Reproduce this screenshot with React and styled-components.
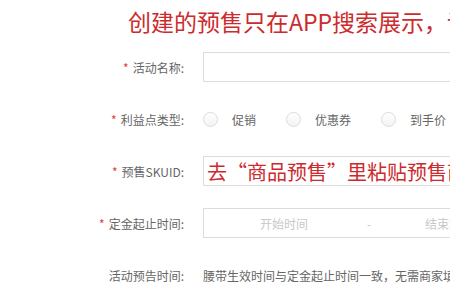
import React from "react";
import styled, { createGlobalStyle } from "styled-components";

const GlobalStyle = createGlobalStyle`
  html, body {
    margin: 0;
    padding: 0;
    background: #fff;
    overflow: hidden;
  }
  body {
    font-family: "Noto Sans CJK SC", "Liberation Sans", sans-serif;
  }
`;

const Page = styled.div`
  width: 450px;
  height: 300px;
  overflow: hidden;
  white-space: nowrap;
`;

const Title = styled.div`
  height: 42px;
  line-height: 42px;
  margin-bottom: 10px;
  padding-left: 128px;
  font-size: 23px;
  color: #cc2b2d;
`;

const Row = styled.div`
  display: flex;
  align-items: center;
  height: 30px;
  margin-bottom: 22px;
`;

const Label = styled.div`
  width: 184px;
  flex-shrink: 0;
  margin-right: 19px;
  text-align: right;
  font-size: 12px;
  color: #666;
`;

const Star = styled.span`
  color: #e4393c;
  margin-right: 4px;
`;

const Box = styled.div`
  flex-shrink: 0;
  width: 300px;
  height: 28px;
  border: 1px solid #dcdcdc;
  display: flex;
  align-items: center;
  overflow: hidden;
  box-sizing: content-box;
`;

const PasteHint = styled.span`
  padding-left: 3px;
  font-size: 20px;
  color: #cc2b2d;
`;

const RangePart = styled.span`
  width: ${p => p.w}px;
  flex-shrink: 0;
  text-align: center;
  font-size: 12px;
  color: #c8c8c8;
`;

const Radios = styled.div`
  display: flex;
  align-items: center;
`;

const RadioItem = styled.label`
  display: flex;
  align-items: center;
  margin-right: 30px;
  font-size: 12px;
  color: #666;
`;

const Circle = styled.span`
  width: 13px;
  height: 13px;
  border-radius: 50%;
  border: 1px solid #dcdcdc;
  background: linear-gradient(#fff, #f3f3f3);
  margin-right: 14px;
`;

const Value = styled.div`
  font-size: 12px;
  color: #666;
`;

const Field = ({ required, label, children }) => (
  <Row>
    <Label>
      {required && <Star>*</Star>}
      {label}:
    </Label>
    {children}
  </Row>
);

export default function App() {
  return (
    <Page>
      <GlobalStyle />
      <Title>创建的预售只在APP搜索展示，请确认</Title>
      <Field required label="活动名称">
        <Box />
      </Field>
      <Field required label="利益点类型">
        <Radios>
          {["促销", "优惠券", "到手价"].map(t => (
            <RadioItem key={t}>
              <Circle />
              {t}
            </RadioItem>
          ))}
        </Radios>
      </Field>
      <Field required label="预售SKUID">
        <Box>
          <PasteHint>去“商品预售”里粘贴预售商品SKUID</PasteHint>
        </Box>
      </Field>
      <Field required label="定金起止时间">
        <Box>
          <RangePart w={160}>开始时间</RangePart>
          <RangePart w={10}>-</RangePart>
          <RangePart w={150}>结束时间</RangePart>
        </Box>
      </Field>
      <Field label="活动预告时间">
        <Value>腰带生效时间与定金起止时间一致，无需商家填写</Value>
      </Field>
    </Page>
  );
}
